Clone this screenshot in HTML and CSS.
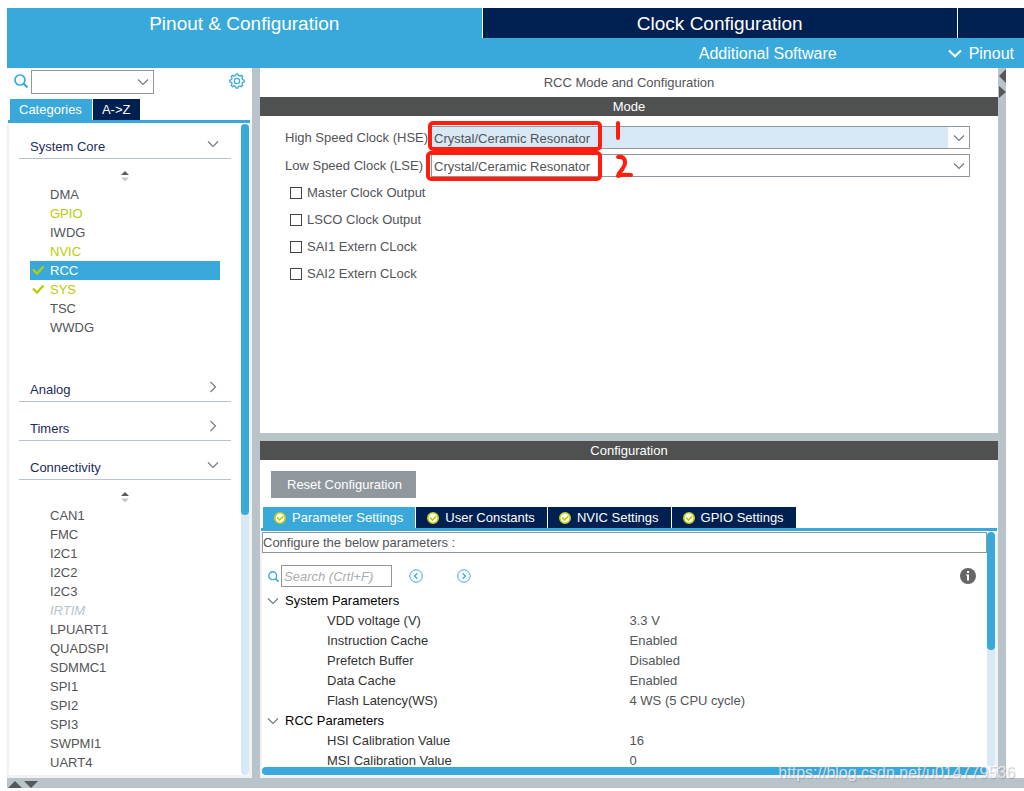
FILE: index.html
```html
<!DOCTYPE html>
<html lang="en">
<head>
<meta charset="utf-8">
<title>RCC Mode and Configuration</title>
<link rel="stylesheet" href="styles.css">
</head>
<body>
<svg class="defs" aria-hidden="true">
  <symbol id="chev-down" viewBox="0 0 12 8"><path d="M1 1.5 6 6.5 11 1.5" fill="none" stroke="currentColor" stroke-width="1.2"/></symbol>
  <symbol id="chev-right" viewBox="0 0 8 12"><path d="M1.5 1 6.5 6 1.5 11" fill="none" stroke="currentColor" stroke-width="1.2"/></symbol>
  <symbol id="search" viewBox="0 0 14 14"><circle cx="6" cy="6" r="5" fill="none" stroke="currentColor" stroke-width="1.7"/><path d="M9.6 9.6 13.4 13.4" stroke="currentColor" stroke-width="2.2"/></symbol>
  <symbol id="sort" viewBox="0 0 10 12"><path d="M5 1 9 5H1z" fill="#5a5c5e"/><path d="M1 7.5H9L5 11.5z" fill="#c4c6c8"/></symbol>
  <symbol id="tick" viewBox="0 0 14 12"><path d="M2 5.5 6 9.5 12.5 2.5" fill="none" stroke="#bbcc01" stroke-width="2.4"/></symbol>
  <symbol id="ok" viewBox="0 0 12 12"><circle cx="6" cy="6" r="5.2" fill="#fff" stroke="#c3d113" stroke-width="1.6"/><path d="M3 5.5 5.5 8 9.2 4.2" fill="none" stroke="#bbcc01" stroke-width="1.6"/></symbol>
</svg>

<div class="app">
  <header class="header">
    <nav class="views">
      <button class="view view-active">Pinout &amp; Configuration</button>
      <button class="view">Clock Configuration</button>
      <button class="view" aria-label="More"></button>
    </nav>
    <div class="subnav">
      <button class="sub">Additional Software</button>
      <button class="sub"><svg class="sub-chev" viewBox="0 0 14 9"><path d="M1 1.5 7 7.3 13 1.5" fill="none" stroke="currentColor" stroke-width="2.2"/></svg>Pinout</button>
    </div>
  </header>

  <div class="workspace">
    <aside class="sidebar">
      <div class="finder">
        <svg class="icon-search"><use href="#search"/></svg>
        <div class="combo finder-combo">
          <select class="select" aria-label="Find peripheral"><option></option></select>
          <svg class="chev"><use href="#chev-down"/></svg>
        </div>
        <button class="gear" aria-label="Settings">
          <svg viewBox="0 0 16 16"><g fill="none" stroke="currentColor"><circle cx="8" cy="8" r="2.6" stroke-width="1.2"/><path d="M6.7 2.4 7.1.8H8.9L9.3 2.4 11 3.1 12.4 2.2 13.8 3.6 12.9 5 13.6 6.7 15.2 7.1V8.9L13.6 9.3 12.9 11 13.8 12.4 12.4 13.8 11 12.9 9.3 13.6 8.9 15.2H7.1L6.7 13.6 5 12.9 3.6 13.8 2.2 12.4 3.1 11 2.4 9.3.8 8.9V7.1L2.4 6.7 3.1 5 2.2 3.6 3.6 2.2 5 3.1z" stroke-width="1.3" stroke-linejoin="round"/></g></svg>
        </button>
      </div>
      <div class="tabs side-tabs">
        <button class="tab tab-active">Categories</button>
        <button class="tab">A-&gt;Z</button>
      </div>
      <div class="side-body">
        <div class="categories">
          <section>
            <button class="category">System Core<svg class="chev"><use href="#chev-down"/></svg></button>
            <div class="group">
              <svg class="sort"><use href="#sort"/></svg>
              <ul class="items">
                <li class="item">DMA</li>
                <li class="item used">GPIO</li>
                <li class="item">IWDG</li>
                <li class="item used">NVIC</li>
                <li class="item selected"><svg class="tick"><use href="#tick"/></svg>RCC</li>
                <li class="item used"><svg class="tick"><use href="#tick"/></svg>SYS</li>
                <li class="item">TSC</li>
                <li class="item">WWDG</li>
              </ul>
            </div>
          </section>
          <section><button class="category">Analog<svg class="chev-r"><use href="#chev-right"/></svg></button></section>
          <section><button class="category">Timers<svg class="chev-r"><use href="#chev-right"/></svg></button></section>
          <section>
            <button class="category">Connectivity<svg class="chev"><use href="#chev-down"/></svg></button>
            <div class="group">
              <svg class="sort"><use href="#sort"/></svg>
              <ul class="items">
                <li class="item">CAN1</li>
                <li class="item">FMC</li>
                <li class="item">I2C1</li>
                <li class="item">I2C2</li>
                <li class="item">I2C3</li>
                <li class="item unavailable">IRTIM</li>
                <li class="item">LPUART1</li>
                <li class="item">QUADSPI</li>
                <li class="item">SDMMC1</li>
                <li class="item">SPI1</li>
                <li class="item">SPI2</li>
                <li class="item">SPI3</li>
                <li class="item">SWPMI1</li>
                <li class="item">UART4</li>
              </ul>
            </div>
          </section>
        </div>
        <div class="scroll"><div class="thumb side-thumb"></div></div>
      </div>
    </aside>

    <main class="details">
      <h1 class="title">RCC Mode and Configuration</h1>
      <section class="pane">
        <h2 class="bar">Mode</h2>
        <div class="mode">
          <div class="field">
            <label for="hse">High Speed Clock (HSE)</label>
            <div class="combo">
              <select id="hse" class="select select-focus"><option>Crystal/Ceramic Resonator</option></select>
              <svg class="chev"><use href="#chev-down"/></svg>
            </div>
          </div>
          <div class="field">
            <label for="lse">Low Speed Clock (LSE)</label>
            <div class="combo">
              <select id="lse" class="select"><option>Crystal/Ceramic Resonator</option></select>
              <svg class="chev"><use href="#chev-down"/></svg>
            </div>
          </div>
          <div class="checks">
            <label class="check"><input type="checkbox">Master Clock Output</label>
            <label class="check"><input type="checkbox">LSCO Clock Output</label>
            <label class="check"><input type="checkbox">SAI1 Extern CLock</label>
            <label class="check"><input type="checkbox">SAI2 Extern CLock</label>
          </div>
          <svg class="marks" viewBox="0 0 212 64" role="img" aria-label="Steps 1 and 2">
            <g fill="none" stroke="#ff1e0e" stroke-width="4" stroke-linecap="round" stroke-linejoin="round">
              <rect x="4" y="5" width="170" height="26" rx="3"/>
              <rect x="2" y="35" width="172" height="26" rx="3"/>
              <path d="M192 5V20"/>
              <path d="M192 39C199 38 201 44 197 50C195 54 192 55 192 58C196 56 200 57 205 57"/>
            </g>
          </svg>
        </div>
      </section>
      <div class="splitter"></div>
      <section class="pane">
        <h2 class="bar">Configuration</h2>
        <div class="actions"><button class="reset">Reset Configuration</button></div>
        <div class="tabs conf-tabs">
          <button class="tab tab-active"><svg class="ok"><use href="#ok"/></svg>Parameter Settings</button>
          <button class="tab"><svg class="ok"><use href="#ok"/></svg>User Constants</button>
          <button class="tab"><svg class="ok"><use href="#ok"/></svg>NVIC Settings</button>
          <button class="tab"><svg class="ok"><use href="#ok"/></svg>GPIO Settings</button>
        </div>
        <div class="conf-body">
          <div class="params">
            <p class="hint">Configure the below parameters :</p>
            <div class="search-row">
              <svg class="icon-search-small"><use href="#search"/></svg>
              <input class="search" type="text" placeholder="Search (Crtl+F)" aria-label="Search parameters">
              <button class="step" aria-label="Previous"><svg viewBox="0 0 14 14"><g fill="none" stroke="currentColor"><circle cx="7" cy="7" r="6.2"/><path d="M8.3 4.2 5.5 7 8.3 9.8" stroke-width="1.3"/></g></svg></button>
              <button class="step" aria-label="Next"><svg viewBox="0 0 14 14"><g fill="none" stroke="currentColor"><circle cx="7" cy="7" r="6.2"/><path d="M5.7 4.2 8.5 7 5.7 9.8" stroke-width="1.3"/></g></svg></button>
              <button class="info" aria-label="Information"><svg viewBox="0 0 16 16"><circle cx="8" cy="8" r="8" fill="#666"/><path d="M7 3h2v2H7zM6 6.5H9V12.5H7V7.5H6z" fill="#fff"/></svg></button>
            </div>
            <table class="tree">
              <tbody>
                <tr class="tree-group"><th colspan="2"><svg class="chev"><use href="#chev-down"/></svg>System Parameters</th></tr>
                <tr><td>VDD voltage (V)</td><td>3.3 V</td></tr>
                <tr><td>Instruction Cache</td><td>Enabled</td></tr>
                <tr><td>Prefetch Buffer</td><td>Disabled</td></tr>
                <tr><td>Data Cache</td><td>Enabled</td></tr>
                <tr><td>Flash Latency(WS)</td><td>4 WS (5 CPU cycle)</td></tr>
                <tr class="tree-group"><th colspan="2"><svg class="chev"><use href="#chev-down"/></svg>RCC Parameters</th></tr>
                <tr><td>HSI Calibration Value</td><td>16</td></tr>
                <tr><td>MSI Calibration Value</td><td>0</td></tr>
              </tbody>
            </table>
          </div>
          <div class="scroll"><div class="thumb conf-thumb"></div></div>
          <div class="hscroll"><div class="thumb h-thumb"></div></div>
        </div>
      </section>
    </main>

    <div class="divider">
      <svg viewBox="0 0 8 32"><path d="M8 1V15L1 8zM1 18V30L8 24z" fill="#555759"/></svg>
    </div>
  </div>

  <footer class="footer">
    <svg viewBox="0 0 32 10"><path d="M1 10 8 3 15 10zM17 3H31L24 10z" fill="#555759"/></svg>
  </footer>
  <div class="watermark">https://blog.csdn.net/u014779536</div>
</div>
</body>
</html>
```

FILE: styles.css
```css
:root {
  --blue: #39a9dc;
  --navy: #002052;
  --steel: #b8c4ca;
  --pale: #d9e8f5;
  --edge: #f0f2f4;
  --border: #90989e;
  --text: #525457;
}

* { box-sizing: border-box; }

body {
  margin: 0;
  background: #fff;
  color: var(--text);
  font: 13px/19px "Liberation Sans", Arial, sans-serif;
}

button, input, select { font: inherit; color: inherit; }

button {
  padding: 0;
  border: 0;
  background: none;
}

svg { display: block; flex: none; }
.defs { position: absolute; width: 0; height: 0; }

.app {
  position: relative;
  display: flex;
  flex-direction: column;
  height: 100vh;
  min-height: 600px;
  padding: 8px 0 3px 7px;
  overflow: hidden;
}

/* Header */
.views {
  display: grid;
  grid-template-columns: 1fr 1fr 66px;
  gap: 1px;
  height: 30px;
}

.view {
  background: var(--navy);
  color: #fff;
  font-size: 19px;
}

.view-active { background: var(--blue); }

.subnav {
  display: flex;
  justify-content: flex-end;
  gap: 111px;
  height: 30px;
  padding-right: 10px;
  background: var(--blue);
  color: #fff;
}

.sub {
  display: flex;
  align-items: center;
  gap: 7px;
  font-size: 16px;
}

.sub-chev { width: 14px; height: 9px; }

/* Work area */
.workspace {
  display: flex;
  flex: 1;
  min-height: 0;
}

.sidebar {
  display: flex;
  flex-direction: column;
  width: 253px;
  border-right: 8px solid var(--steel);
}

.sidebar, .divider { flex: none; }

.finder {
  display: flex;
  gap: 3px;
  height: 31px;
  padding: 2px 7px;
}

.icon-search {
  width: 14px;
  height: 14px;
  margin-top: 4px;
  color: var(--blue);
}

.combo {
  position: relative;
  flex: 1;
  min-width: 0;
}

.finder-combo { flex: 0 0 123px; }

.select {
  display: block;
  width: 100%;
  height: 23px;
  padding: 0 22px 2px 2px;
  border: 1px solid var(--border);
  border-radius: 0;
  background: #fff;
  appearance: none;
}

.finder-combo .select { height: 24px; }
.select-focus { background: linear-gradient(to left, #fff 21px, var(--pale) 21px); }

.chev { width: 12px; height: 8px; color: #777a7d; }
.chev-r { width: 8px; height: 12px; margin-right: 2px; color: #777a7d; }

.combo .chev {
  position: absolute;
  top: 8px;
  right: 5px;
  pointer-events: none;
}

.gear {
  width: 16px;
  height: 16px;
  margin: 3px 0 0 auto;
  color: var(--blue);
}

.tabs {
  display: flex;
  gap: 1px;
  height: 24px;
  border-bottom: 3px solid var(--blue);
}

.side-tabs { margin: 0 2px 0 1px; padding-left: 2px; }

.tab {
  display: flex;
  align-items: center;
  gap: 6px;
  padding: 0 10px 0 9px;
  background: var(--navy);
  color: #fff;
  white-space: nowrap;
}

.tab-active { background: var(--blue); }

.side-body {
  display: flex;
  flex: 1;
  min-height: 0;
  padding: 0 3px 3px 2px;
  background: linear-gradient(#fff, #fff) no-repeat 2px 0 / calc(100% - 5px) calc(100% - 3px) var(--edge);
}

.categories {
  flex: 1;
  min-width: 0;
  padding: 0 10px;
  overflow: hidden;
}

.category {
  display: flex;
  align-items: center;
  justify-content: space-between;
  width: 100%;
  height: 39px;
  padding: 15px 12px 0 11px;
  border-bottom: 1px solid var(--steel);
  color: #1c2c60;
}

section:first-child > .category { height: 36px; padding-top: 12px; }
.category .chev, .category .chev-r { margin-bottom: 5px; }

.group { padding: 11px 0 26px; }
.sort { width: 10px; height: 12px; margin: 0 auto 3px; }

.items {
  margin: 0;
  padding: 0 11px;
  list-style: none;
}

.item { position: relative; padding-left: 20px; }
.used { color: #bbcc01; }
.selected { background: var(--blue); color: #fff; }
.unavailable { color: #b8c4ca; font-style: italic; }

.tick {
  position: absolute;
  top: 3px;
  left: 1px;
  width: 14px;
  height: 12px;
}

.scroll {
  flex: none;
  width: 8px;
  margin-top: 1px;
  border-radius: 4px;
  background: var(--pale);
}

.thumb { border-radius: 4px; background: var(--blue); }
.side-thumb { height: 60%; }

/* Details */
.details {
  display: grid;
  flex: 1;
  grid-template-columns: minmax(0, 1fr);
  grid-template-rows: 29px minmax(0, 336fr) 8px minmax(0, 337fr);
  min-width: 0;
}

.title, .bar {
  margin: 0;
  font-size: 13px;
  font-weight: normal;
  text-align: center;
}

.title { line-height: 29px; }
.bar { flex: none; background: #4f5150; color: #fff; }

.pane {
  display: flex;
  flex-direction: column;
  min-height: 0;
}

.splitter { background: var(--steel); }

.mode {
  position: relative;
  padding: 10px 28px 0 25px;
}

.field {
  display: flex;
  gap: 3px;
  margin-bottom: 5px;
  line-height: 23px;
}

.field label { width: 143px; white-space: nowrap; }

.checks { margin-top: -3px; }

.check {
  display: flex;
  align-items: center;
  gap: 5px;
  width: max-content;
  height: 27px;
  padding-left: 5px;
}

.check input {
  width: 12px;
  height: 12px;
  margin: 0;
  border: 1px solid #444;
  background: #fff;
  appearance: none;
}

.marks {
  position: absolute;
  top: 2px;
  left: 166px;
  width: 212px;
  height: 64px;
  pointer-events: none;
}

.actions { padding: 11px 11px 9px; }

.reset {
  display: block;
  height: 27px;
  padding: 0 14px 0 16px;
  background: var(--border);
  color: #fff;
}

.conf-tabs { flex: none; margin: 0 1px; padding-left: 2px; }
.conf-tabs .tab { padding: 0 12px 0 11px; }
.ok { width: 12px; height: 12px; }

.conf-body {
  display: grid;
  flex: 1;
  grid-template-columns: minmax(0, 1fr) 8px;
  grid-template-rows: minmax(0, 1fr) 8px;
  min-height: 0;
  padding: 0 3px 3px 2px;
  background: linear-gradient(#fff, #fff) no-repeat 2px 0 / calc(100% - 5px) calc(100% - 3px) var(--edge);
}

.params { min-width: 0; min-height: 0; overflow: hidden; }

.hint {
  margin: 1px 0 12px;
  border: 1px solid var(--border);
}

.search-row {
  display: flex;
  align-items: center;
  height: 22px;
  margin-bottom: 4px;
  padding: 0 11px 0 6px;
}

.icon-search-small { width: 11px; height: 11px; color: var(--blue); }

.search {
  width: 111px;
  height: 22px;
  margin: 0 17px 0 2px;
  padding: 0 2px;
  border: 1px solid var(--border);
}

.search::placeholder { color: #aaadb0; font-style: italic; opacity: 1; }
.step { width: 14px; height: 14px; margin-right: 34px; color: var(--blue); }
.info { width: 16px; height: 16px; margin-left: auto; }

.tree {
  width: 100%;
  border-collapse: collapse;
  table-layout: fixed;
  color: #333;
  line-height: 20px;
}

.tree td, .tree th { padding: 0; font-weight: normal; text-align: left; }
.tree td:first-child { padding-left: 65px; }
.tree td:last-child { padding-left: 5px; color: var(--text); }
.tree th { color: #000; }
.tree .chev { float: left; margin: 6px 6px 0 5px; }

.conf-thumb { height: 50%; }
.hscroll { border-radius: 4px; background: var(--pale); }
.h-thumb { width: 100%; height: 8px; }

.divider {
  width: 26px;
  border-right: 18px solid #fff;
  background: var(--steel);
}

.divider svg { width: 8px; height: 32px; }

.footer { height: 10px; background: var(--steel); }
.footer svg { width: 32px; height: 10px; }

.watermark {
  position: absolute;
  right: 9px;
  bottom: 9px;
  color: rgba(255, 255, 255, 0.7);
  font-size: 16px;
  text-shadow: 1px 1px 1px rgba(120, 130, 140, 0.5);
}
```
